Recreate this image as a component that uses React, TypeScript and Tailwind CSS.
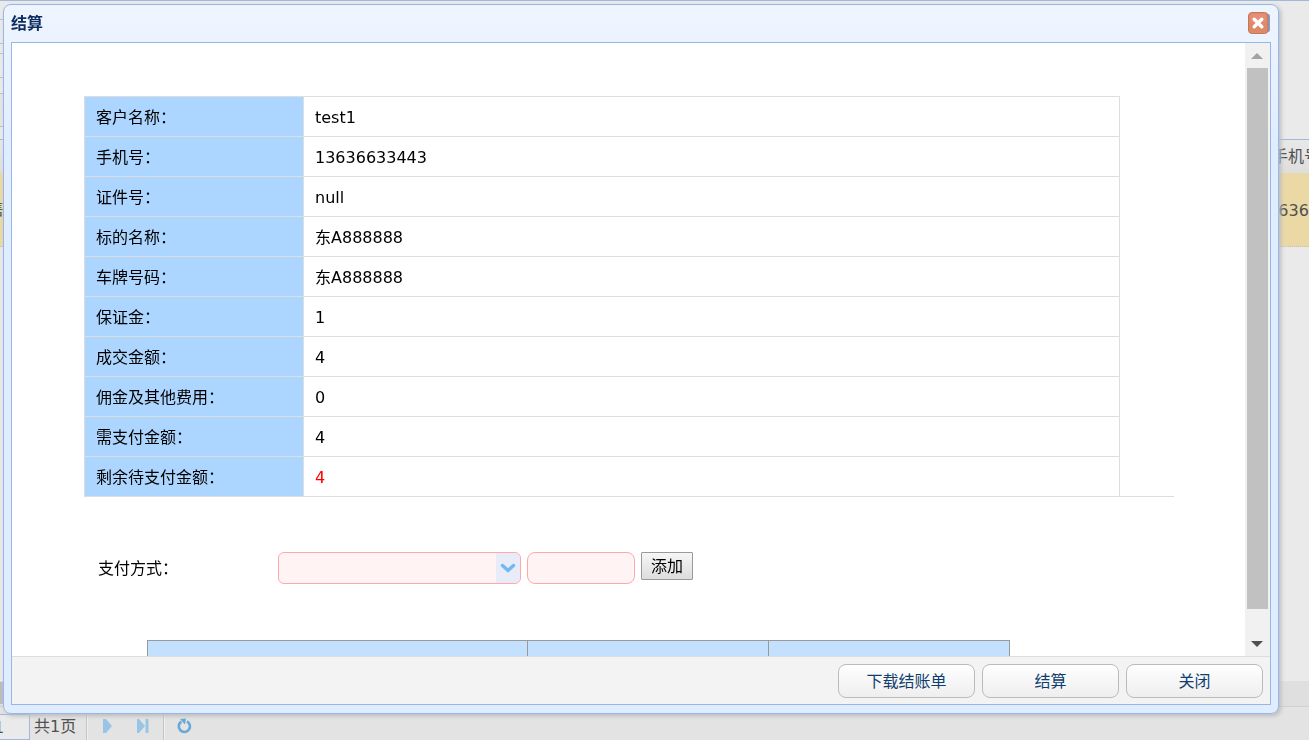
import React, { useState } from 'react';

const customerRows = [
  { label: '客户名称：', value: 'test1' },
  { label: '手机号：', value: '13636633443' },
  { label: '证件号：', value: 'null' },
  { label: '标的名称：', value: '东A888888' },
  { label: '车牌号码：', value: '东A888888' },
  { label: '保证金：', value: '1' },
  { label: '成交金额：', value: '4' },
  { label: '佣金及其他费用：', value: '0' },
  { label: '需支付金额：', value: '4' },
  { label: '剩余待支付金额：', value: '4', danger: true },
];

const CloseIcon = () => (
  <svg width="22" height="22" viewBox="0 0 22 22" aria-hidden="true">
    <rect x="4" y="2" width="18" height="18" rx="2" fill="#7f9fce" />
    <rect x="0.5" y="0.5" width="19.5" height="21" rx="3.5" fill="#dd8a68" stroke="#c47655" />
    <rect x="2" y="2" width="16" height="8" rx="2" fill="#e58d77" />
    <path d="M6.2 7.2 L13.8 14.8 M13.8 7.2 L6.2 14.8" stroke="#fff" strokeWidth="3.4" strokeLinecap="round" />
  </svg>
);

const Separator = () => <div className="h-7 w-px bg-[#c4c4c4] shadow-[1px_0_0_#f0f0f0]" />;

// Grid page behind the dialog
const GridPage: React.FC = () => (
  <div className="flex h-screen flex-col overflow-hidden border-t border-[#a0b8dc] bg-[#eaeaea] text-[#505050]">
    <div className="h-[138px] w-24">
      <div className="h-[18px]" />
      <div className="h-[25px] border-y border-[#c0c0c0]" />
      <div className="h-[9px]" />
      <div className="h-[25px] border-y border-[#c0c0c0]" />
      <div className="h-[15px]" />
      <div className="h-[34px] border-y border-[#c0c0c0] bg-[#e4e4e4]" />
    </div>
    <div className="flex h-[34px] items-center justify-end border-t border-[#a0b8dc] bg-linear-to-b from-[#e8e8e8] to-[#dedede]">
      <div className="w-[37px] shrink-0 overflow-hidden whitespace-nowrap">手机号</div>
    </div>
    <div className="flex h-[74px] items-center justify-between border-b border-dotted border-[#c0c0c0] bg-[#ebd9a5]">
      <div className="flex w-1 justify-end overflow-hidden text-[#4a5c6e]">售</div>
      <div className="w-[51px] shrink-0 overflow-hidden pt-0.5 whitespace-nowrap">13636633443</div>
    </div>
    <div className="flex-1" />
    <div className="h-[26px] border-b border-[#d0d0d0] bg-[#dfdfdf]">
      <div className="mt-px h-[22px] w-24 bg-[#bdbdbd]" />
    </div>
    <div className="flex h-[33px] items-end bg-[#e3e3e3]">
      <input
        aria-label="页码"
        defaultValue="1"
        className="h-[26px] w-[30px] -indent-[6px] border border-l-0 border-[#a0b8dc] bg-[#eaeaea]"
      />
      <span className="ml-1 w-[52px] pt-0.5 leading-[26px]">共1页</span>
      <Separator />
      <button type="button" aria-label="下一页" className="ml-[15px] flex h-7 items-center">
        <svg width="11" height="16" viewBox="0 0 11 16"><path d="M1 1 H4 L10 8 L4 15 H1Z" fill="#98c5e6" /></svg>
      </button>
      <button type="button" aria-label="末页" className="ml-6 flex h-7 items-center">
        <svg width="12" height="16" viewBox="0 0 12 16"><path d="M0 1 H2 L8 8 L2 15 H0Z M8.5 1H11.5V15H8.5Z" fill="#98c5e6" /></svg>
      </button>
      <div className="w-[14px]" />
      <Separator />
      <button type="button" aria-label="刷新" className="ml-[13px] flex h-7 items-center">
        <svg width="15" height="16" viewBox="0 0 15 16">
          <path d="M10 3.4 A5.6 5.6 0 1 1 4.4 3.6" fill="none" stroke="#65a9d8" strokeWidth="2.6" />
          <path d="M3 1 L9 0.5 L8 6.5Z" fill="#65a9d8" />
        </svg>
      </button>
    </div>
  </div>
);

const ScrollColumn = () => (
  <div className="flex w-[25px] shrink-0 flex-col items-center bg-[#f1f1f1] pr-px" aria-hidden="true">
    <div className="flex h-[25px] items-center">
      <svg width="12" height="6" viewBox="0 0 12 6"><path d="M0 6 L6 0 L12 6Z" fill="#a3a3a3" /></svg>
    </div>
    <div className="w-[21px] flex-1 bg-[#c1c1c1]" />
    <div className="flex h-[47px] items-end pb-[9px]">
      <svg width="12" height="6" viewBox="0 0 12 6"><path d="M0 0 L6 6 L12 0Z" fill="#505050" /></svg>
    </div>
  </div>
);

const FooterButton: React.FC<{ children: React.ReactNode; onClick?: () => void }> = ({ children, onClick }) => (
  <button
    type="button"
    onClick={onClick}
    className="h-[34px] w-[137px] rounded-lg border border-[#bbb] bg-linear-to-b from-white to-[#eee] pt-0.5 text-[#0e3d70]"
  >
    {children}
  </button>
);

const SettlementDialog: React.FC = () => {
  const [method, setMethod] = useState('');
  const [amount, setAmount] = useState('');

  return (
    <div
      role="dialog"
      aria-labelledby="dialog-title"
      className="flex min-w-0 flex-1 flex-col rounded-lg border border-[#95b8e7] bg-linear-to-b from-[#eff5ff] to-[#e0ecff] to-20% px-[7px] pb-2 shadow-[2px_2px_4px_#bbb]"
    >
      <div className="flex h-[37px] shrink-0 items-center justify-between">
        <h1 id="dialog-title" className="font-bold text-[#0e2d5f]">结算</h1>
        <button type="button" aria-label="关闭" className="pr-px pb-0.5"><CloseIcon /></button>
      </div>

      <div className="flex min-h-0 flex-1 flex-col border border-[#95b8e7] bg-white">
        <div className="flex min-h-0 flex-1">
          <div className="min-w-0 flex-1 overflow-hidden">
            <div className="mt-[53px] mr-[71px] ml-[72px]">
              <table className="w-[95%] table-fixed border-collapse">
                <tbody>
                  {customerRows.map((row) => (
                    <tr key={row.label} className="h-10">
                      <th scope="row" className="w-[219px] border border-[#ddd] bg-[#acd6ff] pt-0.5 pl-[11px] text-left font-normal">
                        {row.label}
                      </th>
                      <td className={`border border-[#ddd] pt-0.5 pl-[11px] ${row.danger ? 'text-[#f00]' : ''}`}>{row.value}</td>
                    </tr>
                  ))}
                </tbody>
              </table>
              <div className="-mt-px ml-[220px] border-b border-[#ddd]" />
            </div>

            <div className="mt-[55px] ml-[86px] flex items-start">
              <label htmlFor="pay-method" className="w-[180px] pt-px leading-8">支付方式：</label>
              <div className="relative">
                <select
                  id="pay-method"
                  value={method}
                  onChange={(e) => setMethod(e.target.value)}
                  className="block h-8 w-[243px] appearance-none rounded-md border border-[#ffa8a8] bg-[#fff3f3]"
                >
                  <option value=""></option>
                </select>
                <span className="pointer-events-none absolute inset-y-px right-px flex w-6 items-center justify-center rounded-r-md bg-[#e8ecf9]">
                  <svg width="16" height="10" viewBox="0 0 16 10">
                    <path d="M2.5 2.5 L8 7.5 L13.5 2.5" fill="none" stroke="#73b9f0" strokeWidth="3.4" strokeLinecap="round" />
                  </svg>
                </span>
              </div>
              <input
                type="text"
                aria-label="支付金额"
                value={amount}
                onChange={(e) => setAmount(e.target.value)}
                className="ml-1.5 h-8 w-[108px] rounded-lg border border-[#ffa8a8] bg-[#fff3f3] px-2"
              />
              <button type="button" className="ml-1.5 h-7 w-[52px] rounded-[1px] border border-[#999] bg-linear-to-b from-[#f6f6f6] to-[#ddd] pt-0.5">
                添加
              </button>
            </div>

            <table className="mt-[55px] ml-[135px] w-[70%] table-fixed border-collapse bg-[#c4e0ff]">
              <thead>
                <tr className="h-10">
                  <th aria-label="支付方式" className="border border-[#999]" />
                  <th aria-label="金额" className="w-[241px] border border-[#999]" />
                  <th aria-label="操作" className="w-[241px] border border-[#999]" />
                </tr>
              </thead>
            </table>
          </div>
          <ScrollColumn />
        </div>

        <div className="flex h-12 shrink-0 justify-end gap-[7px] border-t border-[#ddd] bg-[#f3f3f3] pt-[7px] pr-[7px]">
          <FooterButton>下载结账单</FooterButton>
          <FooterButton>结算</FooterButton>
          <FooterButton>关闭</FooterButton>
        </div>
      </div>
    </div>
  );
};

const App: React.FC = () => (
  <div className="font-['DejaVu_Sans','Noto_Sans_CJK_SC',sans-serif] text-base text-black">
    <GridPage />
    <div className="fixed inset-0 flex pt-1 pr-[30px] pb-[26px] pl-[3px]">
      <SettlementDialog />
    </div>
  </div>
);

export default App;
